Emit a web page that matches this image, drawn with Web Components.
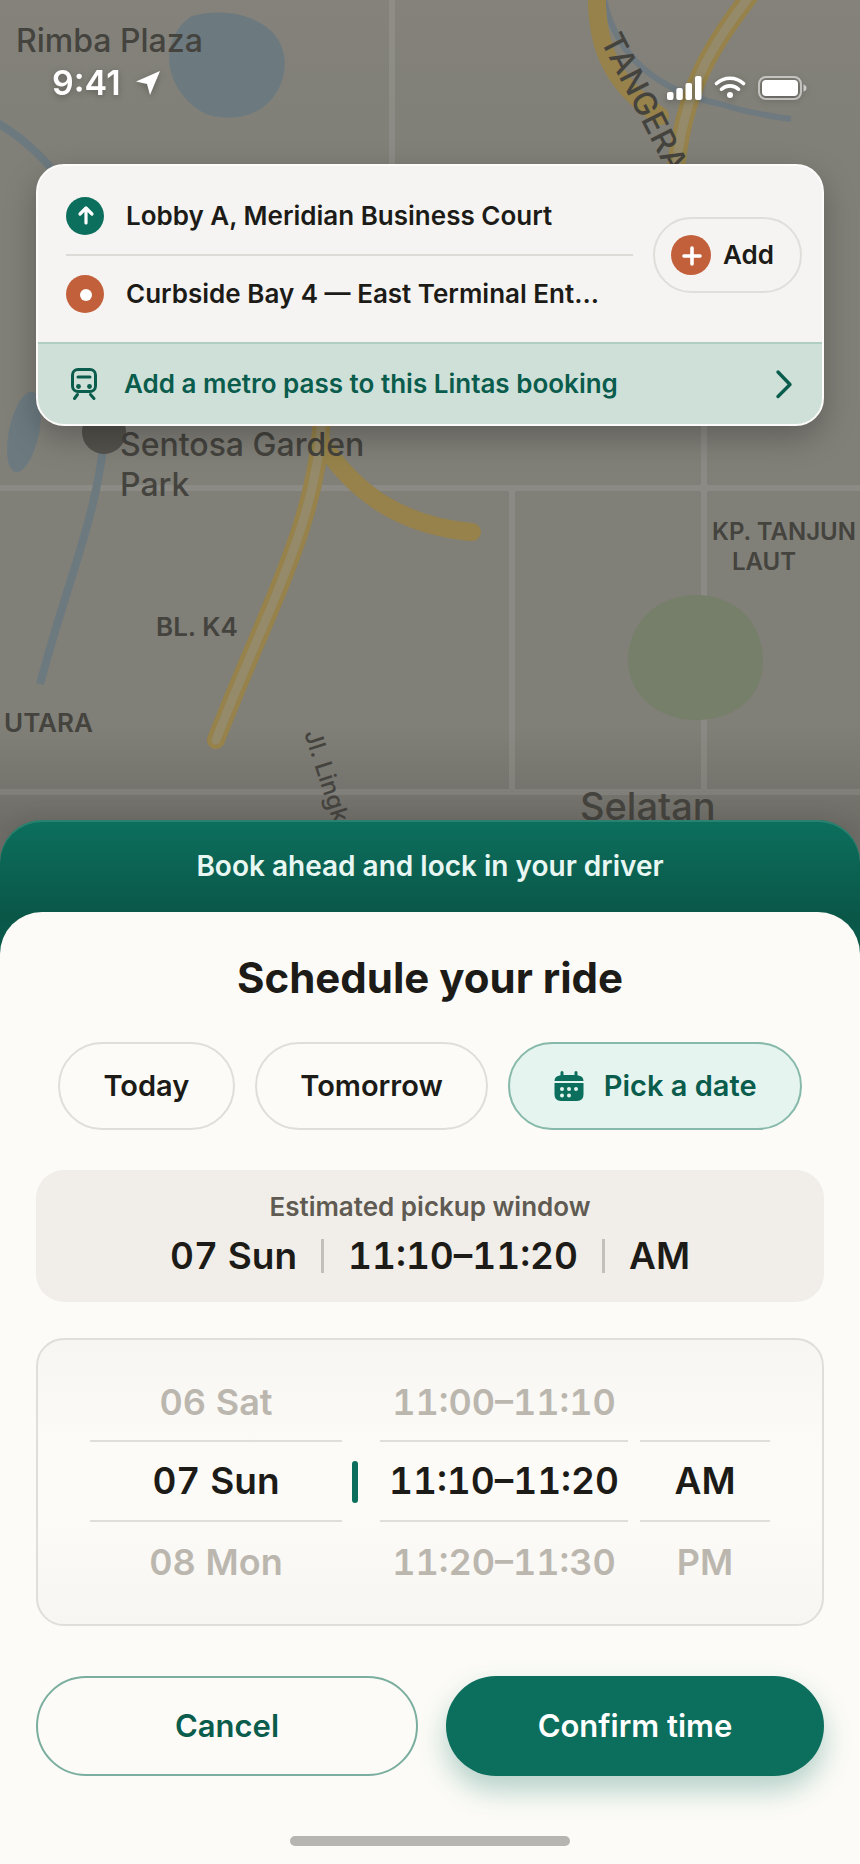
<!DOCTYPE html>
<html lang="en">
<head>
<meta charset="utf-8">
<meta name="viewport" content="width=device-width, initial-scale=1">
<title>Schedule your ride</title>
<style>
    :root {
        --ink: #1c1b17;
        --green: #0c6e5c;
        --green-dark: #0a5c4c;
        --orange: #c3603c;
        --paper: #fcfbf7;
        --line: #dfdeda;
        --muted: #bbb7af;
    }

    body {
        margin: 0;
        background: var(--paper);
        color: var(--ink);
        font-family: Inter, "Liberation Sans", sans-serif;
    }
</style>
</head>
<body>
<ride-app></ride-app>

<script>
class RideApp extends HTMLElement {
    constructor() {
        super();
        this.attachShadow({ mode: 'open' });
    }

    connectedCallback() {
        this.shadowRoot.innerHTML = `
        <style>
        :host {
            display: flex;
            flex-direction: column;
            min-height: 100vh;
        }

        .stage {
            flex: 1;
            display: grid;
            grid-template: minmax(0, 1fr) / minmax(0, 1fr);
            min-height: 520px;
        }

        .stage > * {
            grid-area: 1 / 1;
        }

        .overlay {
            z-index: 1;
        }

        trip-card {
            margin: 62px 36px 0;
        }

        ride-sheet {
            z-index: 2;
            margin-top: -42px;
        }
        </style>

        <div class="stage">
            <ride-map></ride-map>
            <div class="overlay">
                <status-bar time="9:41"></status-bar>
                <trip-card>
                    <trip-stop slot="stops" kind="pickup">Lobby A, Meridian Business Court</trip-stop>
                    <trip-stop slot="stops" kind="dropoff">Curbside Bay 4 — East Terminal Ent...</trip-stop>
                    <span slot="promo">Add a metro pass to this Lintas booking</span>
                </trip-card>
            </div>
        </div>

        <ride-sheet>
            <span slot="banner">Book ahead and lock in your driver</span>
            <span slot="title">Schedule your ride</span>
            <day-tabs></day-tabs>
            <pickup-window day="07 Sun" time="11:10–11:20" half="AM">Estimated pickup window</pickup-window>
            <time-wheel></time-wheel>
            <sheet-actions></sheet-actions>
        </ride-sheet>`;
    }
}

class RideMap extends HTMLElement {
    constructor() {
        super();
        this.attachShadow({ mode: 'open' });
    }

    connectedCallback() {
        this.shadowRoot.innerHTML = `
        <style>
        :host {
            display: block;
            contain: size;
            overflow: hidden;
            background: linear-gradient(180deg, #84827a 0, #807f78 18%, #807f78 84%, #6f6d67 96%);
        }

        svg {
            display: block;
            width: 100%;
            height: 100%;
        }

        .street { stroke: #fff; stroke-opacity: 0.09; stroke-width: 6; }
        .river { stroke: #6c7a80; stroke-width: 8; }
        .toll { stroke: #96824a; stroke-width: 18; stroke-linecap: round; }
        .median { stroke: #958b6a; stroke-width: 9; stroke-linecap: round; }

        text {
            fill: #44433e;
            font-family: Inter, "Liberation Sans", sans-serif;
            font-weight: 500;
        }

        .place { font-size: 32px; }
        .area { font-size: 26px; font-weight: 600; }
        .small { font-size: 24px; }
        </style>

        <svg viewBox="0 0 860 862" preserveAspectRatio="xMidYMin slice" role="img" aria-label="Map of the pickup area">
            <g fill="none">
                <path class="street" d="M392 0V300M0 488H860M0 792H860M704 300V485M704 491V789M512 491V789"/>
                <path class="river" d="M-6 121C24 138 44 158 66 186"/>
                <path class="river" d="M104 440C98 500 78 556 64 602Q48 654 40 684"/>
                <path stroke="#6f7a80" stroke-width="6" d="M604 0C618 62 664 92 720 104Q752 114 791 119"/>
            </g>
            <path fill="#6c7a80" d="M192 16C222 8 252 14 270 30C290 48 288 78 274 96C258 120 222 122 202 112C176 96 166 70 170 48C174 32 182 22 192 16Z"/>
            <ellipse fill="#6c7a80" cx="24" cy="432" rx="15" ry="41" transform="rotate(12 24 432)"/>
            <path fill="#767f69" d="M696 595c40 0 67 28 67 66s-30 59-67 59-68-24-68-60 28-65 68-65z"/>
            <circle cx="104" cy="432" r="22" fill="#53524c"/>
            <g fill="none">
                <path class="toll" d="M597 -12C595 46 612 84 660 116"/>
                <path class="toll" d="M754 -10C712 46 682 88 675 180"/>
                <path class="median" d="M754 -10C712 46 682 88 675 180"/>
                <path class="toll" d="M320 440C356 496 404 526 472 532"/>
                <path class="toll" d="M322 410C320 520 266 610 216 740"/>
                <path class="median" d="M322 410C320 520 266 610 216 740"/>
            </g>
            <text class="place" x="16" y="52">Rimba Plaza</text>
            <text class="place" x="120" y="456">Sentosa Garden</text>
            <text class="place" x="120" y="496">Park</text>
            <text class="area" x="156" y="636">BL. K4</text>
            <text class="area" x="4" y="732">UTARA</text>
            <text class="area small" x="712" y="540">KP. TANJUN</text>
            <text class="area small" x="732" y="570">LAUT</text>
            <text x="580" y="820" font-size="38">Selatan</text>
            <text class="place" transform="translate(600 40) rotate(63)">TANGERA</text>
            <text class="small" transform="translate(304 733) rotate(72)">Jl. Lingk</text>
        </svg>`;
    }
}

class StatusBar extends HTMLElement {
    constructor() {
        super();
        this.attachShadow({ mode: 'open' });
    }

    connectedCallback() {
        this.shadowRoot.innerHTML = `
        <style>
        :host {
            display: flex;
            align-items: center;
            justify-content: space-between;
            padding: 64px 52px 0;
            color: #fff;
            filter: drop-shadow(0 2px 3px rgba(0, 0, 0, 0.25));
        }

        div {
            display: flex;
            align-items: center;
            gap: 14px;
        }

        time {
            font-size: 34px;
            font-weight: 600;
            line-height: 38px;
        }

        .signals {
            gap: 12px;
            padding-top: 10px;
        }

        svg {
            display: block;
        }
        </style>

        <div>
            <time>${this.getAttribute('time')}</time>
            <svg width="26" height="26" viewBox="0 0 26 26" aria-hidden="true">
                <path fill="#fff" d="M25 1 1 11.500l11 2.500 3 11z"/>
            </svg>
        </div>
        <div class="signals">
            <svg width="35" height="24" viewBox="0 0 35 24" fill="#fff" aria-hidden="true">
                <rect x="0" y="16" width="6.500" height="8" rx="2"/>
                <rect x="9.300" y="12" width="6.500" height="12" rx="2"/>
                <rect x="18.500" y="7" width="6.500" height="17" rx="2"/>
                <rect x="28" y="0" width="6.500" height="24" rx="2"/>
            </svg>
            <svg width="32" height="24" viewBox="0 0 32 24" fill="none" stroke="#fff" stroke-width="3.600" stroke-linecap="round" aria-hidden="true">
                <path d="M2.500 7.500a20 20 0 0 1 27 0M7.500 13.200a12.500 12.500 0 0 1 17 0"/>
                <circle cx="16" cy="19" r="3" fill="#fff" stroke="none"/>
            </svg>
            <svg width="50" height="24" viewBox="0 0 50 24" aria-hidden="true">
                <rect x="1" y="1" width="42" height="22" rx="7" fill="none" stroke="#fff" stroke-opacity=".55" stroke-width="2"/>
                <rect x="4" y="4" width="36" height="16" rx="4" fill="#fff"/>
                <path d="M45.500 8.500q3 1 3 3.500t-3 3.500z" fill="#fff" fill-opacity=".6"/>
            </svg>
        </div>`;
    }
}

class TripCard extends HTMLElement {
    constructor() {
        super();
        this.attachShadow({ mode: 'open' });
    }

    connectedCallback() {
        this.shadowRoot.innerHTML = `
        <style>
        :host {
            display: block;
            overflow: hidden;
            border: 2px solid #fdfcfa;
            border-radius: 28px;
            background: #f5f4f2;
            box-shadow: 0 12px 32px rgba(0, 0, 0, 0.25);
        }

        .route {
            display: flex;
            align-items: center;
            gap: 20px;
            padding: 12px 20px 10px 28px;
        }

        .stops {
            flex: 1;
            min-width: 0;
        }

        button {
            display: flex;
            align-items: center;
            gap: 12px;
            height: 76px;
            padding: 0 26px 0 16px;
            border: 2px solid var(--line);
            border-radius: 38px;
            background: none;
            color: inherit;
            font: 600 26px/32px Inter, "Liberation Sans", sans-serif;
            cursor: pointer;
        }

        a {
            display: flex;
            align-items: center;
            height: 80px;
            padding: 0 28px;
            border-top: 2px solid #b0cec2;
            background: #cfe0d9;
            color: var(--green-dark);
            font-size: 26px;
            font-weight: 600;
            line-height: 32px;
            text-decoration: none;
        }

        a span {
            flex: 1;
            min-width: 0;
            margin-left: 22px;
        }

        svg {
            display: block;
            flex: none;
        }
        </style>

        <div class="route">
            <div class="stops"><slot name="stops"></slot></div>
            <button type="button">
                <svg width="40" height="40" viewBox="0 0 40 40" aria-hidden="true">
                    <circle cx="20" cy="20" r="20" fill="#c3603c"/>
                    <path d="M21 13v16M13 21h16" stroke="#fff" stroke-width="3.600" stroke-linecap="round"/>
                </svg>
                Add
            </button>
        </div>
        <a href="#metro-pass">
            <svg width="36" height="36" viewBox="0 0 36 36" fill="none" stroke="#0a5c4c" stroke-width="3" stroke-linecap="round" aria-hidden="true">
                <rect x="6.500" y="3.500" width="23" height="22" rx="5.500"/>
                <path d="M12 11h12" />
                <path d="M11.500 28.500 8.500 32.500M24.500 28.500l3.500 4"/>
                <circle cx="12.500" cy="20.500" r="2.400" fill="#0a5c4c" stroke="none"/>
                <circle cx="23.500" cy="20.500" r="2.400" fill="#0a5c4c" stroke="none"/>
            </svg>
            <span><slot name="promo"></slot></span>
            <svg width="20" height="32" viewBox="0 0 20 32" fill="none" stroke="#0a5c4c" stroke-width="3.400" stroke-linecap="round" stroke-linejoin="round" aria-hidden="true">
                <path d="M4 4l12 12.500L4 28.500"/>
            </svg>
        </a>`;
    }
}

class TripStop extends HTMLElement {
    constructor() {
        super();
        this.attachShadow({ mode: 'open' });
    }

    connectedCallback() {
        const pickup = this.getAttribute('kind') === 'pickup';
        const glyph = pickup
            ? '<path d="M20 26V12M14 17l6-6 6 6" fill="none" stroke="#fff" stroke-width="3.200" stroke-linecap="round" stroke-linejoin="round"/>'
            : '<circle cx="20" cy="20" r="6" fill="#fff"/>';

        this.shadowRoot.innerHTML = `
        <style>
        :host {
            display: flex;
            align-items: center;
            gap: 22px;
            height: 76px;
            font-size: 26px;
            font-weight: 600;
            line-height: 32px;
        }

        :host([kind="pickup"]) {
            border-bottom: 2px solid #dcdbd8;
        }

        svg {
            flex: none;
        }

        span {
            overflow: hidden;
            text-overflow: ellipsis;
            white-space: nowrap;
        }
        </style>

        <svg width="38" height="38" viewBox="0 0 38 38" aria-hidden="true">
            <circle cx="19" cy="19" r="19" fill="${pickup ? '#0c6e5c' : '#c3603c'}"/>
            ${glyph}
        </svg>
        <span><slot></slot></span>`;
    }
}

class RideSheet extends HTMLElement {
    constructor() {
        super();
        this.attachShadow({ mode: 'open' });
    }

    connectedCallback() {
        this.shadowRoot.innerHTML = `
        <style>
        :host {
            display: block;
            border-radius: 42px 42px 0 0;
            background: linear-gradient(180deg, #0c6f5d 0, #0a5748 96px, #0a5c4c 140px);
            box-shadow: inset 0 2px 0 rgba(70, 150, 130, 0.5), 0 -4px 20px rgba(0, 0, 0, 0.08);
        }

        .banner {
            margin: 0;
            padding: 28px 24px;
            color: #e9f7f3;
            font-size: 28px;
            font-weight: 600;
            line-height: 36px;
            text-align: center;
        }

        main {
            padding: 38px 36px 18px;
            border-radius: 42px 42px 0 0;
            background: var(--paper);
        }

        h1 {
            margin: 0 0 36px;
            font-size: 42px;
            font-weight: 700;
            line-height: 56px;
            text-align: center;
        }

        .home {
            width: 280px;
            height: 10px;
            margin: 60px auto 0;
            border-radius: 5px;
            background: #b7b5b1;
        }
        </style>

        <p class="banner"><slot name="banner"></slot></p>
        <main>
            <h1><slot name="title"></slot></h1>
            <slot></slot>
            <div class="home"></div>
        </main>`;
    }
}

class DayTabs extends HTMLElement {
    constructor() {
        super();
        this.attachShadow({ mode: 'open' });
    }

    connectedCallback() {
        this.shadowRoot.innerHTML = `
        <style>
        :host {
            display: flex;
            justify-content: center;
            gap: 20px;
            margin: 0 22px;
        }

        button {
            display: flex;
            flex: auto;
            align-items: center;
            justify-content: center;
            gap: 20px;
            height: 88px;
            padding: 0 42px;
            border: 2px solid var(--line);
            border-radius: 44px;
            background: none;
            color: inherit;
            font: 600 29px/36px Inter, "Liberation Sans", sans-serif;
            white-space: nowrap;
            cursor: pointer;
        }

        button[aria-pressed="true"] {
            border-color: #86b9aa;
            background: #e5f4ef;
            color: var(--green-dark);
        }
        </style>

        <button type="button" aria-pressed="false">Today</button>
        <button type="button" aria-pressed="false">Tomorrow</button>
        <button type="button" aria-pressed="true">
            <svg width="30" height="32" viewBox="0 0 30 32" aria-hidden="true">
                <path fill="#0c6e5c" d="M6.500 2.500a1.500 1.500 0 0 1 3 0V5h11V2.500a1.500 1.500 0 0 1 3 0V5.200Q29.500 6 29.500 11H.5Q.5 6 6.500 5.200zM.5 13h29v11.500q0 6.500-6.500 6.500H7Q.5 31 .5 24.500z"/>
                <g fill="#e5f4ef">
                    <circle cx="8" cy="19" r="2"/><circle cx="15" cy="19" r="2"/><circle cx="22" cy="19" r="2"/>
                    <circle cx="8" cy="25.500" r="2"/><circle cx="15" cy="25.500" r="2"/>
                </g>
            </svg>
            Pick a date
        </button>`;

        this.shadowRoot.querySelectorAll('button').forEach((button, i, all) => {
            button.addEventListener('click', () => {
                all.forEach(other => other.setAttribute('aria-pressed', other === button));
            });
        });
    }
}

class PickupWindow extends HTMLElement {
    constructor() {
        super();
        this.attachShadow({ mode: 'open' });
    }

    connectedCallback() {
        this.shadowRoot.innerHTML = `
        <style>
        :host {
            display: block;
            margin-top: 40px;
            padding: 20px 24px 22px;
            border-radius: 28px;
            background: #f1eeea;
            text-align: center;
        }

        p {
            margin: 0;
            color: #5f5b52;
            font-size: 26px;
            font-weight: 600;
            line-height: 34px;
        }

        div {
            display: flex;
            align-items: center;
            justify-content: center;
            gap: 24px;
            margin-top: 8px;
            font-size: 37px;
            font-weight: 600;
            font-variant-numeric: tabular-nums;
            line-height: 48px;
            white-space: nowrap;
        }

        i {
            width: 3px;
            height: 34px;
            background: #c3c0ba;
        }
        </style>

        <p><slot></slot></p>
        <div>
            <span>${this.getAttribute('day')}</span><i></i>
            <span>${this.getAttribute('time')}</span><i></i>
            <span>${this.getAttribute('half')}</span>
        </div>`;
    }
}

class TimeWheel extends HTMLElement {
    constructor() {
        super();
        this.attachShadow({ mode: 'open' });
    }

    column(name, legend, options) {
        const rows = options.map((text, i) => text
            ? `<label><input type="radio" name="${name}" ${i === 1 ? 'checked' : ''}><span>${text}</span></label>`
            : '<div class="empty"></div>');
        return `<fieldset class="${name}" aria-label="${legend}">${rows.join('')}</fieldset>`;
    }

    connectedCallback() {
        this.shadowRoot.innerHTML = `
        <style>
        :host {
            display: grid;
            grid-template-columns: 252fr 38px 248fr 12px 130fr;
            margin-top: 36px;
            padding: 22px 52px;
            border: 2px solid var(--line);
            border-radius: 28px;
            background: linear-gradient(180deg, #f7f6f3, var(--paper) 40%, var(--paper) 60%, #f7f6f3);
        }

        fieldset {
            min-width: 0;
            margin: 0;
            padding: 0;
            border: 0;
        }

        .day { grid-column: 1; }
        .slot { grid-column: 3; }
        .half { grid-column: 5; }

        label, .empty {
            display: flex;
            align-items: center;
            justify-content: center;
            box-sizing: border-box;
            height: 80px;
            color: var(--muted);
            font-size: 36px;
            font-weight: 600;
            font-variant-numeric: tabular-nums;
            line-height: 48px;
            white-space: nowrap;
        }

        fieldset > :nth-child(2) {
            height: 82px;
            margin-top: -2px;
            border: solid var(--line);
            border-width: 2px 0;
        }

        label:has(:checked) {
            color: var(--ink);
            font-size: 37px;
        }

        input {
            appearance: none;
            width: 0;
            height: 0;
            margin: 0;
        }

        .mark {
            grid-column: 2;
            align-self: center;
            width: 6px;
            height: 42px;
            margin-left: 10px;
            border-radius: 3px;
            background: var(--green);
        }
        </style>

        ${this.column('day', 'Day', ['06 Sat', '07 Sun', '08 Mon'])}
        <div class="mark"></div>
        ${this.column('slot', 'Time', ['11:00–11:10', '11:10–11:20', '11:20–11:30'])}
        ${this.column('half', 'AM or PM', ['', 'AM', 'PM'])}`;
    }
}

class SheetActions extends HTMLElement {
    constructor() {
        super();
        this.attachShadow({ mode: 'open' });
    }

    connectedCallback() {
        this.shadowRoot.innerHTML = `
        <style>
        :host {
            display: flex;
            gap: 28px;
            margin-top: 50px;
        }

        button {
            flex: 1;
            height: 100px;
            padding: 0;
            border: 0;
            border-radius: 50px;
            font: 600 31px/40px Inter, "Liberation Sans", sans-serif;
            cursor: pointer;
        }

        .cancel {
            border: 2px solid #7bae9f;
            background: none;
            color: var(--green-dark);
        }

        .confirm {
            background: var(--green);
            color: #fff;
            box-shadow: 0 14px 28px rgba(12, 110, 92, 0.3);
        }
        </style>

        <button type="button" class="cancel">Cancel</button>
        <button type="button" class="confirm">Confirm time</button>`;
    }
}

customElements.define('ride-map', RideMap);
customElements.define('status-bar', StatusBar);
customElements.define('trip-stop', TripStop);
customElements.define('trip-card', TripCard);
customElements.define('day-tabs', DayTabs);
customElements.define('pickup-window', PickupWindow);
customElements.define('time-wheel', TimeWheel);
customElements.define('sheet-actions', SheetActions);
customElements.define('ride-sheet', RideSheet);
customElements.define('ride-app', RideApp);
</script>
</body>
</html>
